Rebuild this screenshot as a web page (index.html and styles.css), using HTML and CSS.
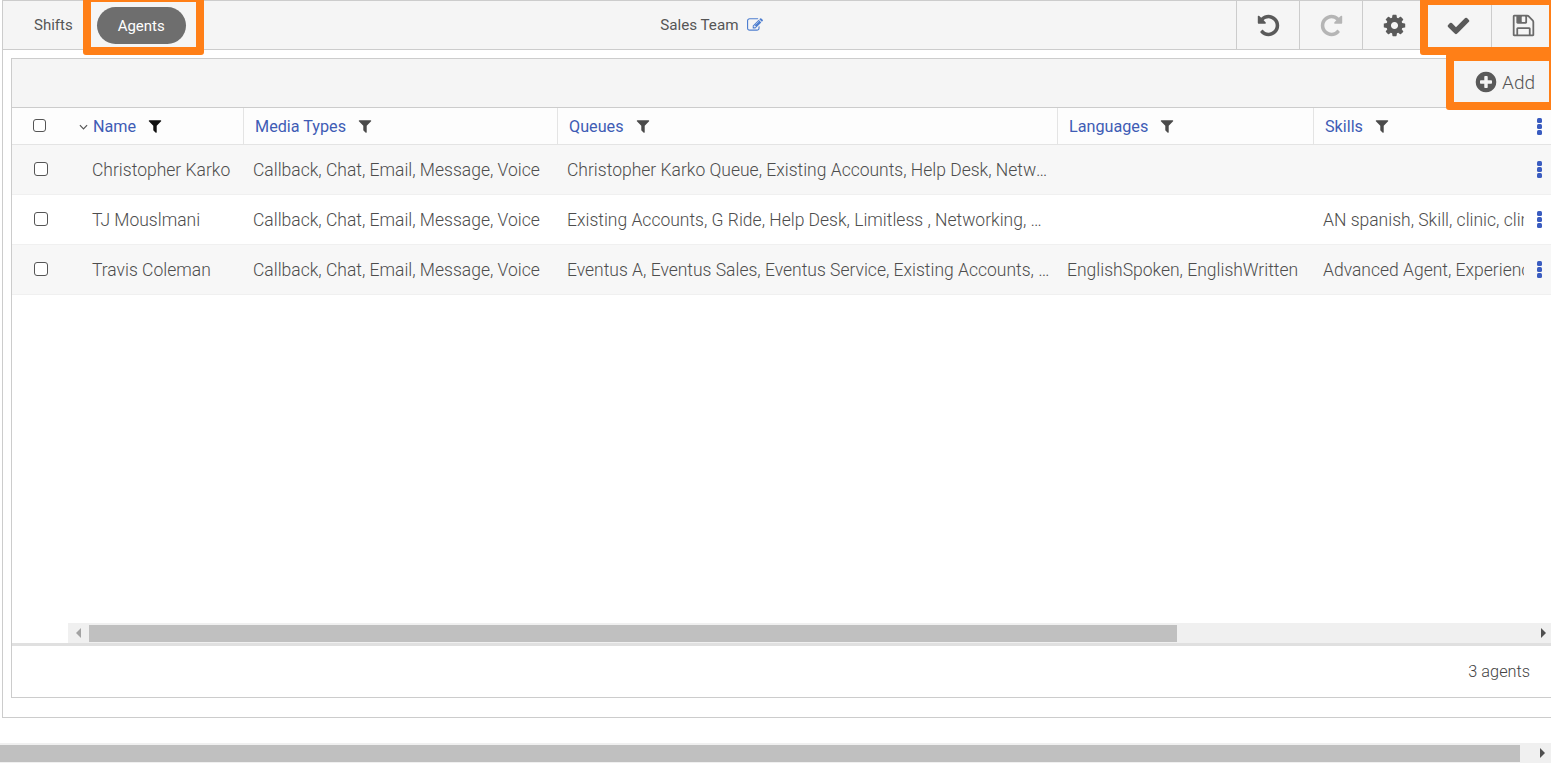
FILE: index.html
```html
<!DOCTYPE html>
<html lang="en">
<head>
  <meta charset="UTF-8">
  <title>Sales Team - Agents</title>
  <link rel="stylesheet" href="styles.css">
</head>
<body>
  <svg class="defs" width="0" height="0">
    <symbol id="i-filter" viewBox="0 0 1792 1792"><path d="M1595 295q17 41-14 70l-493 493v742q0 42-39 59-13 5-25 5-27 0-45-19l-256-256q-19-19-19-45v-486l-493-493q-31-29-14-70 17-39 59-39h1280q42 0 59 39z"/></symbol>
    <symbol id="i-kebab" viewBox="0 0 5 17"><rect x="0" y="0" width="5" height="5" rx="1.5"/><rect x="0" y="6" width="5" height="5" rx="1.5"/><rect x="0" y="12" width="5" height="5" rx="1.5"/></symbol>
  </svg>

  <div class="page">
    <div class="frame">
      <div class="toolbar">
        <div class="tabs">
          <a class="tab">Shifts</a>
          <a class="tab active">Agents</a>
        </div>
        <div class="title">
          <span>Sales Team</span>
          <svg class="edit" viewBox="0 0 1792 1792"><path d="M888 1184l116-116-152-152-116 116v56h96v96h56zm440-720q-16-16-33 1l-350 350q-17 17-1 33t33-1l350-350q17-17 1-33zm80 594v190q0 119-84.5 203.5t-203.5 84.5h-832q-119 0-203.5-84.5t-84.5-203.5v-832q0-119 84.5-203.5t203.5-84.5h832q63 0 117 25 15 7 18 23 3 17-9 29l-49 49q-14 14-32 8-23-6-45-6h-832q-66 0-113 47t-47 113v832q0 66 47 113t113 47h832q66 0 113-47t47-113v-126q0-13 9-22l64-64q15-15 35-7t20 29zm-96-738l288 288-672 672h-288v-288zm444 132l-92 92-288-288 92-92q28-28 68-28t68 28l152 152q28 28 28 68t-28 68z"/></svg>
        </div>
        <div class="tools">
          <button class="tool"><svg viewBox="0 0 1792 1792"><path d="M1664 896q0 156-61 298t-164 245-245 164-298 61q-172 0-327-72.5t-264-204.5q-7-10-6.5-22.5t8.5-20.5l137-138q10-9 25-9 16 2 23 12 73 95 179 147t225 52q104 0 198.5-40.5t163.5-109.5 109.5-163.5 40.5-198.5-40.5-198.5-109.5-163.5-163.5-109.5-198.5-40.5q-98 0-188 35.5t-160 101.5l137 138q31 30 14 69-17 40-59 40h-448q-26 0-45-19t-19-45v-448q0-42 40-59 39-17 69 14l130 129q107-101 244.5-156.5t284.5-55.5q156 0 298 61t245 164 164 245 61 298z"/></svg></button>
          <button class="tool off"><svg viewBox="0 0 1792 1792"><path d="M1664 256v448q0 26-19 45t-45 19h-448q-42 0-59-40-17-39 14-69l138-138q-148-137-349-137-104 0-198.5 40.5t-163.5 109.5-109.5 163.5-40.5 198.5 40.5 198.5 109.5 163.5 163.5 109.5 198.5 40.5q119 0 225-52t179-147q7-10 23-12 15 0 25 9l137 138q9 8 9.5 20.5t-7.5 22.5q-109 132-264 204.5t-327 72.5q-156 0-298-61t-245-164-164-245-61-298 61-298 164-245 245-164 298-61q147 0 284.5 55.5t244.5 156.5l130-129q29-31 70-14 39 17 39 59z"/></svg></button>
          <button class="tool"><svg viewBox="0 0 1792 1792"><path d="M1152 896q0-106-75-181t-181-75-181 75-75 181 75 181 181 75 181-75 75-181zm512-109v222q0 12-8 23t-20 13l-185 28q-19 54-39 91 35 50 107 138 10 12 10 25t-9 23q-27 37-99 108t-94 71q-12 0-26-9l-138-108q-44 23-91 38-16 136-29 186-7 28-36 28h-222q-14 0-24.5-8.5t-11.5-21.5l-28-184q-49-16-90-37l-141 107q-10 9-25 9-14 0-25-11-126-114-165-168-7-10-7-23 0-12 8-23 15-21 51-66.5t54-70.5q-27-50-41-99l-183-27q-13-2-21-12.5t-8-23.5v-222q0-12 8-23t19-13l186-28q14-46 39-92-40-57-107-138-10-12-10-24 0-10 9-23 26-36 98.5-107.5t94.5-71.5q13 0 26 10l138 107q44-23 91-38 16-136 29-186 7-28 36-28h222q14 0 24.5 8.5t11.5 21.5l28 184q49 16 90 37l142-107q9-9 24-9 13 0 25 10 129 119 165 170 7 8 7 22 0 12-8 23-15 21-51 66.5t-54 70.5q26 50 41 98l183 28q13 2 21 12.5t8 23.5z"/></svg></button>
          <button class="tool wide"><svg viewBox="0 0 1792 1792"><path d="M1671 566q0 40-28 68l-724 724-136 136q-28 28-68 28t-68-28l-136-136-362-362q-28-28-28-68t28-68l136-136q28-28 68-28t68 28l294 295 656-657q28-28 68-28t68 28l136 136q28 28 28 68z"/></svg></button>
          <button class="tool save"><svg viewBox="0 0 1792 1792"><path d="M512 1536h768v-384h-768v384zm896 0h128v-896q0-14-10-38.5t-20-34.5l-281-281q-10-10-34-20t-39-10v416q0 40-28 68t-68 28h-576q-40 0-68-28t-28-68v-416h-128v1280h128v-416q0-40 28-68t68-28h832q40 0 68 28t28 68v416zm-384-928v-320q0-13-9.5-22.5t-22.5-9.5h-192q-13 0-22.5 9.5t-9.5 22.5v320q0 13 9.5 22.5t22.5 9.5h192q13 0 22.5-9.5t9.5-22.5zm640 32v928q0 40-28 68t-68 28h-1344q-40 0-68-28t-28-68v-1344q0-40 28-68t68-28h928q40 0 88 20t76 48l280 280q28 28 48 76t20 88z"/></svg></button>
        </div>
      </div>

      <div class="content">
        <div class="panel">
          <div class="subbar">
            <button class="add">
              <svg viewBox="0 0 1792 1792"><path d="M1344 960v-128q0-26-19-45t-45-19h-256v-256q0-26-19-45t-45-19h-128q-26 0-45 19t-19 45v256h-256q-26 0-45 19t-19 45v128q0 26 19 45t45 19h256v256q0 26 19 45t45 19h128q26 0 45-19t19-45v-256h256q26 0 45-19t19-45zm320-64q0 209-103 385.5t-279.5 279.5-385.5 103-385.5-103-279.5-279.5-103-385.5 103-385.5 279.5-279.5 385.5-103 385.5 103 279.5 279.5 103 385.5z"/></svg>
              <span>Add</span>
            </button>
          </div>

          <div class="row head">
            <div class="cell check"><input type="checkbox"></div>
            <div class="cell name">
              <svg class="chev" viewBox="0 0 10 6"><path d="M1 1l4 4 4-4"/></svg>
              <a>Name</a>
              <svg class="funnel dark"><use href="#i-filter"/></svg>
            </div>
            <div class="cell"><a>Media Types</a><svg class="funnel"><use href="#i-filter"/></svg></div>
            <div class="cell"><a>Queues</a><svg class="funnel"><use href="#i-filter"/></svg></div>
            <div class="cell"><a>Languages</a><svg class="funnel"><use href="#i-filter"/></svg></div>
            <div class="cell last"><a>Skills</a><svg class="funnel"><use href="#i-filter"/></svg></div>
            <div class="cell kebab"><svg><use href="#i-kebab"/></svg></div>
          </div>

          <div class="row item shaded">
            <div class="cell check"><input type="checkbox"></div>
            <div class="cell name">Christopher Karko</div>
            <div class="cell">Callback, Chat, Email, Message, Voice</div>
            <div class="cell">Christopher Karko Queue, Existing Accounts, Help Desk, Networking, Sales</div>
            <div class="cell"></div>
            <div class="cell clip"></div>
            <div class="cell kebab"><svg><use href="#i-kebab"/></svg></div>
          </div>
          <div class="row item">
            <div class="cell check"><input type="checkbox"></div>
            <div class="cell name">TJ Mouslmani</div>
            <div class="cell">Callback, Chat, Email, Message, Voice</div>
            <div class="cell">Existing Accounts, G Ride, Help Desk, Limitless , Networking, Sales Team</div>
            <div class="cell"></div>
            <div class="cell clip">AN spanish, Skill, clinic, clinical</div>
            <div class="cell kebab"><svg><use href="#i-kebab"/></svg></div>
          </div>
          <div class="row item shaded">
            <div class="cell check"><input type="checkbox"></div>
            <div class="cell name">Travis Coleman</div>
            <div class="cell">Callback, Chat, Email, Message, Voice</div>
            <div class="cell">Eventus A, Eventus Sales, Eventus Service, Existing Accounts, G Ride, Help Desk</div>
            <div class="cell">EnglishSpoken, EnglishWritten</div>
            <div class="cell clip">Advanced Agent, Experienced</div>
            <div class="cell kebab"><svg><use href="#i-kebab"/></svg></div>
          </div>

          <div class="grid-space"></div>

          <div class="grid-scroll">
            <div class="scroll-btn"><i class="arrow left"></i></div>
            <div class="scroll-thumb"></div>
            <div class="scroll-rest"><i class="arrow right"></i></div>
          </div>

          <div class="footer">3 agents</div>
        </div>
      </div>
    </div>

    <div class="page-scroll">
      <div class="page-thumb"></div>
      <div class="page-rest"><i class="arrow right"></i></div>
    </div>

    <div class="mark mark-tab"></div>
    <div class="mark mark-save"></div>
    <div class="mark mark-add"></div>
  </div>
</body>
</html>
```

FILE: styles.css
```css
* {
  box-sizing: border-box;
}

html, body {
  margin: 0;
  height: 100%;
  overflow: hidden;
  background: #fff;
}

body {
  font-family: Roboto, "Liberation Sans", sans-serif;
  color: #555;
}

.defs {
  position: absolute;
}

.page {
  position: relative;
  width: 1551px;
  height: 763px;
  overflow: hidden;
}

.frame {
  width: 1552px;
  height: 718px;
  margin-left: 2px;
  border: 1px solid #ccc;
  border-right: 0;
}

/* top bar */
.toolbar {
  display: flex;
  align-items: stretch;
  height: 49px;
  background: #f5f5f5;
  border-bottom: 1px solid #ccc;
}

.tabs {
  display: flex;
  align-items: center;
  padding-left: 31px;
  font-size: 15px;
}

.tab {
  color: #555;
}

.tab.active {
  display: flex;
  align-items: center;
  justify-content: center;
  width: 89px;
  height: 37px;
  margin-left: 24px;
  margin-top: 1px;
  border-radius: 19px;
  background: #6e6e6e;
  color: #fff;
}

.title {
  flex: 1;
  display: flex;
  align-items: center;
  justify-content: center;
  gap: 9px;
  padding-left: 2px;
  font-size: 15.2px;
}

.edit {
  width: 16px;
  height: 16px;
  fill: #4f7fd0;
}

.tools {
  display: flex;
}

.tool {
  display: flex;
  align-items: center;
  justify-content: center;
  width: 63px;
  padding: 0;
  border: 0;
  border-left: 1px solid #ccc;
  background: transparent;
}

.tool.wide {
  width: 66px;
}

.tool svg {
  width: 25px;
  height: 25px;
  fill: #5a5a5a;
}

.tool.off svg {
  fill: #b5b5b5;
}

.tool.save svg {
  fill: #6a6a6a;
}

/* agents panel */
.content {
  padding: 8px 0 0 8px;
}

.panel {
  display: flex;
  flex-direction: column;
  height: 640px;
  border: 1px solid #ccc;
  border-right: 0;
}

.subbar {
  display: flex;
  flex: 0 0 49px;
  background: #f5f5f5;
  border-bottom: 1px solid #ccc;
}

.add {
  display: flex;
  align-items: center;
  gap: 4px;
  height: 46px;
  margin-left: 1462px;
  padding: 0;
  border: 0;
  background: transparent;
  font-family: inherit;
  font-size: 19px;
  font-weight: 300;
  color: #555;
}

.add svg {
  width: 24px;
  height: 24px;
  fill: #5a5a5a;
}

.row {
  display: grid;
  grid-template-columns: 59px 173px 314px 500px 256px 210px 30px;
  flex: 0 0 auto;
}

.cell {
  display: flex;
  align-items: center;
  min-width: 0;
  overflow: hidden;
}

.head {
  height: 37px;
  border-bottom: 1px solid #e4e4e4;
  background: #fdfdfd;
  font-size: 16.2px;
}

.head .cell {
  padding-left: 11px;
  border-right: 1px solid #e4e4e4;
}

.head a {
  color: #3f5cb5;
}

.head .check {
  padding-left: 21px;
  border-right: 0;
}

.head .name {
  padding-left: 8px;
}

.head .last {
  border-right: 0;
}

.head .kebab {
  padding-left: 0;
  border-right: 0;
}

.chev {
  width: 9px;
  height: 6px;
  margin-right: 5px;
  margin-top: 1px;
  fill: none;
  stroke: #555;
  stroke-width: 1.3;
}

.funnel {
  width: 16px;
  height: 16px;
  margin-left: 11px;
  fill: #4a4a4a;
}

.funnel.dark {
  fill: #111;
}

.kebab svg {
  width: 5px;
  height: 17px;
  margin-left: 13px;
  fill: #3a5cc0;
}

.item {
  height: 50px;
  border-bottom: 1px solid #f0f0f0;
  background: #fff;
  font-size: 17.5px;
  font-weight: 300;
  color: #4d4d4d;
}

.item.shaded {
  background: #f7f7f7;
}

.item .cell {
  display: block;
  padding: 0 8px 0 9px;
  line-height: 51px;
  white-space: nowrap;
  text-overflow: ellipsis;
}

.item .check {
  padding: 0 0 0 22px;
}

.item .name {
  padding-left: 21px;
}

.item .clip {
  padding-right: 0;
  text-overflow: clip;
}

.item .kebab {
  display: flex;
  padding: 0;
}

input[type="checkbox"] {
  appearance: none;
  display: block;
  width: 14px;
  height: 14px;
  margin: 0;
  border: 1.5px solid #555;
  border-radius: 3px;
  background: #fff;
}

.head input[type="checkbox"] {
  width: 13px;
  height: 13px;
  margin-top: -1px;
}

.item input[type="checkbox"] {
  margin-top: 17px;
}

.grid-space {
  flex: 1;
}

/* scrollbars */
.grid-scroll {
  display: flex;
  flex: 0 0 20px;
  margin-left: 56px;
  background: #f0f0f0;
}

.scroll-btn {
  display: flex;
  align-items: center;
  justify-content: center;
  width: 21px;
}

.scroll-thumb {
  width: 1088px;
  margin: 2px 0 1px;
  background: #c0c0c0;
}

.scroll-rest {
  display: flex;
  align-items: center;
  flex: 1;
  padding-left: 364px;
}

.arrow {
  display: block;
  width: 0;
  height: 0;
  border-style: solid;
  border-color: transparent;
  border-width: 5px 0 5px 5px;
}

.arrow.left {
  border-width: 5px 5px 5px 0;
  border-right-color: #a3a3a3;
}

.arrow.right {
  border-left-color: #505050;
}

.footer {
  flex: 0 0 54px;
  padding: 16px 24px 0 0;
  border-top: 3px solid #e0e0e0;
  font-size: 16.3px;
  font-weight: 300;
  line-height: 20px;
  color: #444;
  text-align: right;
}

.page-scroll {
  display: flex;
  height: 20px;
  margin-top: 25px;
  background: #f0f0f0;
}

.page-thumb {
  width: 1520px;
  margin: 2px 0 1px;
  background: #c0c0c0;
}

.page-rest {
  display: flex;
  align-items: center;
  padding-left: 20px;
}

/* orange callouts drawn over the screenshot */
.mark {
  position: absolute;
  border: 8px solid #ff7f17;
  border-radius: 3px;
}

.mark-tab {
  left: 83px;
  top: -6px;
  width: 121px;
  height: 61px;
}

.mark-save {
  left: 1420px;
  top: -3px;
  width: 137px;
  height: 58px;
}

.mark-add {
  left: 1446px;
  top: 53px;
  width: 111px;
  height: 57px;
}
```
